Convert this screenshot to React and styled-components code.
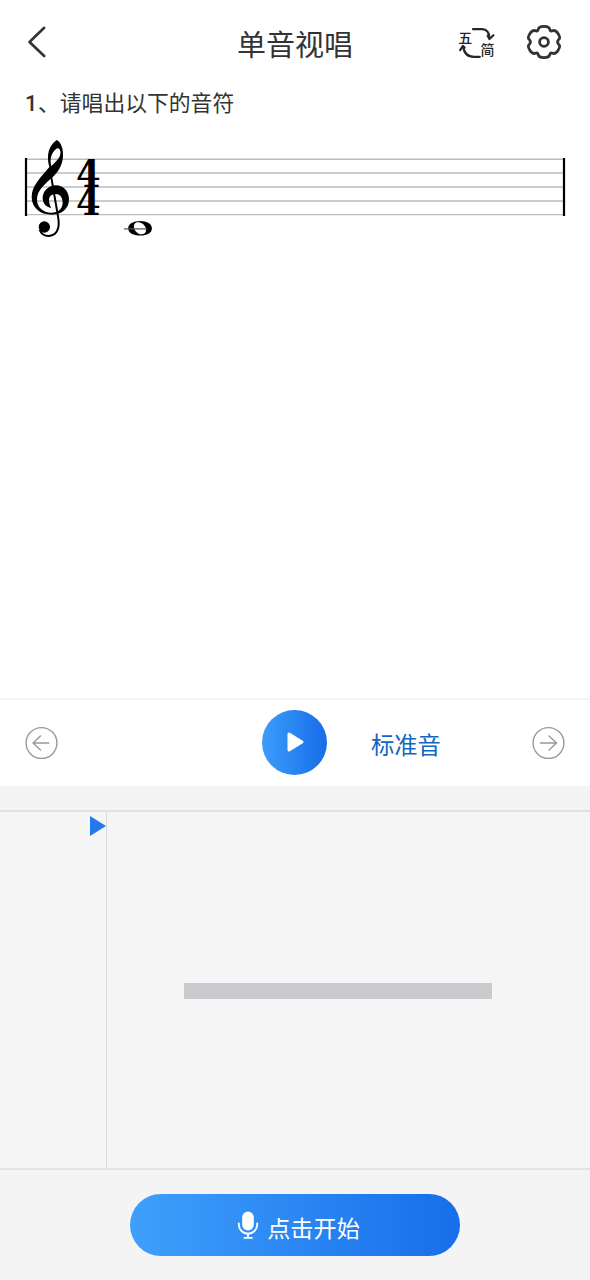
import React from "react";
import styled, { createGlobalStyle } from "styled-components";

const GlobalStyle = createGlobalStyle`
  * {
    box-sizing: border-box;
  }

  body {
    margin: 0;
    background: #fff;
    color: #333;
    font-family: "Noto Sans CJK SC", sans-serif;
  }

  button {
    padding: 0;
    border: 0;
    background: none;
    font-family: inherit;
  }

  svg {
    display: block;
  }
`;

const BackIcon = () => (
  <svg width="24" height="36" viewBox="0 0 24 36" fill="none" stroke="#333" strokeWidth="2.6" strokeLinecap="round" strokeLinejoin="round">
    <path d="M21.2 3.8 L6.5 18 L21.2 32" />
  </svg>
);

// Switches between staff (五) and numbered (简) notation
const NotationIcon = () => (
  <svg width="40" height="36" viewBox="0 0 40 36">
    <g fill="none" stroke="#262626" strokeWidth="2.2" strokeLinecap="round" strokeLinejoin="round">
      <path d="M17 5.2 H26 Q33.2 5.4 33.4 14.2" />
      <path d="M31.6 11.6 L33.4 15 L37.4 11.2" />
      <path d="M23.8 32.8 H18 Q8.4 32.8 7.2 22.5" />
      <path d="M4.2 26.2 L6.8 22 L8.6 23.6" />
    </g>
    <NotationText x="2.3" y="18.8">五</NotationText>
    <NotationText x="24.6" y="31.2">简</NotationText>
  </svg>
);

const SettingsIcon = () => (
  <svg width="36" height="36" viewBox="0 0 36 36" fill="none" stroke="#333" strokeWidth="2.8" strokeLinejoin="round">
    <path d="M12 6 Q12.4 2.4 18 2.4 Q23.6 2.4 24 6 Q24.3 7.4 26.2 6.8 Q29.4 5.6 32 9.6 Q34.9 14 32.8 15.4 Q30.4 18 32.8 20.6 Q34.9 22 32 26.4 Q29.4 30.4 26.2 29.2 Q24.3 28.6 24 30 Q23.6 33.6 18 33.6 Q12.4 33.6 12 30 Q11.7 28.6 9.8 29.2 Q6.6 30.4 4 26.4 Q1.1 22 3.2 20.6 Q5.6 18 3.2 15.4 Q1.1 14 4 9.6 Q6.6 5.6 9.8 6.8 Q11.7 7.4 12 6 Z" />
    <circle cx="18" cy="18" r="4.4" />
  </svg>
);

const ArrowIcon = ({ right }) => (
  <svg width="34" height="34" viewBox="0 0 34 34" fill="none" stroke="#999" strokeWidth="1.4" strokeLinecap="round" strokeLinejoin="round">
    <circle cx="17.5" cy="17" r="15.4" />
    <path d={right ? "M9.5 17 H25.5 M18 10 L25.5 17 L18 24" : "M24.8 17 H9 M16.5 10 L9 17 L16.5 24"} />
  </svg>
);

const PlayIcon = () => (
  <svg width="18" height="22" viewBox="0 0 18 22" fill="#fff" stroke="#fff" strokeWidth="3" strokeLinejoin="round">
    <path d="M2 3 L15 11 L2 19 Z" />
  </svg>
);

const MicIcon = () => (
  <svg width="22" height="30" viewBox="0 0 22 30">
    <rect x="5.2" y="1.5" width="11.6" height="19" rx="5.8" fill="#fff" />
    <path d="M1.8 13.5 V14.5 A9.2 9.2 0 0 0 20.2 14.5 V13.5 M11 24 V27.5 M7.5 27.9 H14.8" fill="none" stroke="#fff" strokeWidth="1.9" strokeLinecap="round" />
  </svg>
);

const TrebleClef = () => (
  <g transform="scale(0.33333)">
    <path
      fillRule="evenodd"
      d="M125 30 C139 37 145 58 144 78 C143 107 128 128 111 143 C90 162 66 180 66 209 C66 232 85 247 108 248 C130 249 143 236 143 217 C143 202 134 192 122 192 C110 192 102 199 102 210 C102 220 106 227 108 234 C94 232 83 220 83 205 C83 184 100 166 123 166 C147 166 162 186 162 208 C162 237 140 254 111 254 C75 254 50 233 50 201 C50 167 76 144 103 111 C93 76 101 47 125 30 Z M109 108 C127 92 139 79 136 64 C134 54 127 52 120 60 C108 72 104 90 109 108 Z"
    />
    <path d="M106 125 L130 265 C135 299 123 317 101 318 C88 318 78 310 74 300" fill="none" stroke="#000" strokeWidth="6" />
    <circle cx="88" cy="291" r="17" />
  </g>
);

// Whole note on a short ledger line below the staff
const WholeNote = () => (
  <g>
    <path
      fillRule="evenodd"
      d="M125.3 91.1 C132 91.1 136.9 94 136.9 98.4 C136.9 102.8 132 105.5 125.3 105.5 C118.3 105.5 113.2 102.8 113.2 98.4 C113.2 94 118.3 91.1 125.3 91.1 Z M123 92.3 C119.6 92.3 118.4 94.9 119.2 98.2 C120.2 101.8 123.4 104.5 127 104.3 C130.6 104.1 131.6 101.3 130.7 98 C129.7 94.7 126.5 92.3 123 92.3 Z"
    />
    <path d="M109 98.9 H132" stroke="#555" strokeWidth="1.2" />
  </g>
);

const STAFF_LINES = [29.2, 43, 57, 71, 84.6];

const Staff = () => (
  <StaffSvg viewBox="0 0 590 120">
    {STAFF_LINES.map((y) => (
      <path key={y} d={`M25 ${y} H565`} stroke="#bbb" strokeWidth="1.4" />
    ))}
    <path d="M26 28 V86 M564 28 V86" stroke="#000" strokeWidth="2.2" />
    <g transform="translate(15 0)">
      <TrebleClef />
      <WholeNote />
    </g>
    <g transform="translate(76 0) scale(0.93 1)">
      <TimeText x="0" y="57">4</TimeText>
      <TimeText x="0" y="85">4</TimeText>
    </g>
  </StaffSvg>
);

const App = () => (
  <>
    <GlobalStyle />
    <Page>
      <Header>
        <HeaderSide>
          <IconButton aria-label="back"><BackIcon /></IconButton>
        </HeaderSide>
        <Title>单音视唱</Title>
        <HeaderSide $end>
          <IconButton aria-label="notation"><NotationIcon /></IconButton>
          <IconButton aria-label="settings"><SettingsIcon /></IconButton>
        </HeaderSide>
      </Header>

      <Question>
        <Number>1</Number>、请唱出以下的音符
      </Question>
      <Score>
        <Staff />
      </Score>

      <Controls>
        <ControlSide>
          <IconButton aria-label="previous"><ArrowIcon /></IconButton>
        </ControlSide>
        <PlayButton aria-label="play"><PlayIcon /></PlayButton>
        <ControlSide $spread>
          <StandardTone>标准音</StandardTone>
          <IconButton aria-label="next"><ArrowIcon right /></IconButton>
        </ControlSide>
      </Controls>

      <PitchPanel>
        <PitchGutter>
          <Marker />
        </PitchGutter>
        <PitchTrack>
          <PitchBar />
        </PitchTrack>
      </PitchPanel>

      <Footer>
        <StartButton>
          <MicIcon />
          <span>点击开始</span>
        </StartButton>
      </Footer>
    </Page>
  </>
);

export default App;

const Page = styled.div`
  display: flex;
  flex-direction: column;
  width: 590px;
  height: 1280px;
  background: #f4f4f4;
  overflow: hidden;
`;

const Header = styled.header`
  display: grid;
  grid-template-columns: 1fr auto 1fr;
  align-items: center;
  height: 84px;
  padding: 0 28px 0 23px;
  background: #fff;
`;

const HeaderSide = styled.div`
  display: flex;
  align-items: center;
  justify-content: ${({ $end }) => ($end ? "flex-end" : "flex-start")};
  gap: 30px;
`;

const IconButton = styled.button`
  display: flex;
  flex: none;
`;

const Title = styled.h1`
  margin: 0;
  padding: 2px 0 0 5px;
  font-size: 29px;
  font-weight: 400;
  line-height: 40px;
`;

const NotationText = styled.text`
  font-size: 14px;
  font-weight: 500;
  fill: #262626;
`;

const Question = styled.p`
  height: 46px;
  margin: 0;
  padding: 2px 25px 0;
  background: #fff;
  font-size: 21.8px;
  line-height: 32px;
`;

const Number = styled.span`
  display: inline-block;
  width: 13px;
  font-family: Roboto, sans-serif;
  font-weight: 500;
`;

const Score = styled.section`
  flex: none;
  height: 568px;
  background: #fff;
`;

const StaffSvg = styled.svg`
  width: 590px;
  height: 120px;
`;

const TimeText = styled.text`
  font-family: "DejaVu Serif", serif;
  font-size: 38px;
  font-weight: 700;
  fill: #000;
`;

const Controls = styled.section`
  display: grid;
  grid-template-columns: 1fr 65px 1fr;
  align-items: center;
  height: 88px;
  padding: 0 25px 0 24px;
  border-top: 2px solid #f5f5f5;
  background: #fff;
`;

const ControlSide = styled.div`
  display: flex;
  align-items: center;
  justify-content: space-between;
  padding-left: ${({ $spread }) => ($spread ? "44px" : "0")};
`;

const PlayButton = styled.button`
  display: flex;
  align-items: center;
  justify-content: center;
  width: 65px;
  height: 65px;
  margin-bottom: 2px;
  padding-left: 3px;
  border-radius: 50%;
  background: linear-gradient(90deg, #3c9df9, #176ce9);
`;

const StandardTone = styled.button`
  padding-top: 2px;
  color: #1265c0;
  font-size: 23.3px;
  line-height: 34px;
`;

const PitchPanel = styled.section`
  display: flex;
  height: 360px;
  margin-top: 24px;
  border-top: 2px solid #e0e0e0;
  border-bottom: 2px solid #e3e3e3;
  background: #f5f5f5;
`;

const PitchGutter = styled.div`
  display: flex;
  justify-content: flex-end;
  width: 107px;
  padding-top: 4px;
  border-right: 1px solid #d9d9d9;
`;

const Marker = styled.div`
  width: 16px;
  height: 20px;
  background: #2478ea;
  clip-path: polygon(0 0, 100% 50%, 0 100%);
`;

const PitchTrack = styled.div`
  flex: 1;
  padding: 171px 0 0 77px;
`;

const PitchBar = styled.div`
  width: 308px;
  height: 16px;
  background: #cacacf;
`;

const Footer = styled.footer`
  display: flex;
  justify-content: center;
  padding-top: 24px;
`;

const StartButton = styled.button`
  display: flex;
  align-items: center;
  justify-content: center;
  gap: 8px;
  width: 330px;
  height: 62px;
  padding-left: 7px;
  border-radius: 31px;
  background: linear-gradient(90deg, #3fa0fb, #176eea);
  color: #fff;
  font-size: 23.2px;
  line-height: 34px;

  span {
    padding-top: 4px;
  }
`;
